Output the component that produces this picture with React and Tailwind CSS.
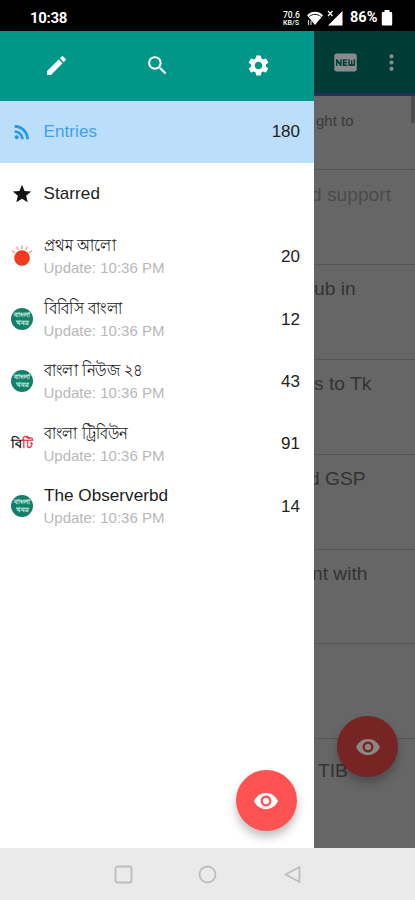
import {
  MdEdit,
  MdSearch,
  MdSettings,
  MdRssFeed,
  MdStar,
  MdMoreVert,
  MdFiberNew,
  MdRemoveRedEye,
} from "react-icons/md";

const feeds = [
  { title: "প্রথম আলো", count: 20, icon: "sun", width: 72 },
  { title: "বিবিসি বাংলা", count: 12, icon: "green", width: 79 },
  { title: "বাংলা নিউজ ২৪", count: 43, icon: "green", width: 99 },
  { title: "বাংলা ট্রিবিউন", count: 91, icon: "tribune", width: 84 },
  { title: "The Observerbd", count: 14, icon: "green", width: 124 },
];

const articles = [
  { text: "ght to", row: "h-[74px] pt-[15px]", style: "text-[15px] ml-[2px] text-[#3a3a3a]" },
  { text: "d support", row: "h-[95px] pt-[15px]", style: "text-[19.2px] -ml-[3px] text-[#4b4b4b]" },
  { text: "ub in", row: "h-[95px] pt-[14px]", style: "text-[19.2px] text-[#333333]" },
  { text: "s to Tk", row: "h-[95px] pt-[14px]", style: "text-[19.2px] text-[#333333]" },
  { text: "d GSP", row: "h-[95px] pt-[14px]", style: "text-[19.2px] -ml-[5px] text-[#333333]" },
  { text: "nt with", row: "h-[94px] pt-[14px]", style: "text-[19.2px] -ml-[2px] text-[#333333]" },
  { text: "", row: "h-[95px] pt-[15px]", style: "" },
  { text: "TIB", row: "h-[110px] pt-[22px]", style: "text-[19.2px] ml-[4px] text-[#333333]" },
];

function SunIcon() {
  return (
    <svg width="22" height="22" viewBox="0 0 22 22">
      <circle cx="11" cy="13" r="7.8" fill="#f03c1c" />
      <g stroke="#f2987f" strokeWidth="1.3" strokeLinecap="round">
        <path d="M11 3.5V1M7 4.5 5.8 2.2M15 4.5l1.2-2.3M3.5 7.5 1.3 6M18.500 7.5 20.700 6" />
      </g>
    </svg>
  );
}

function GreenIcon() {
  return (
    <div className="flex h-[22px] w-[22px] flex-col items-center justify-center rounded-full bg-[#128068] text-[7px] leading-[8px] font-bold text-[#d5eee8]">
      <span>বাংলা</span>
      <span>খবর</span>
    </div>
  );
}

function TribuneIcon() {
  return (
    <div className="flex w-[22px] justify-center text-[13px] leading-[16px] font-black">
      <span className="text-[#222222]">বি</span>
      <span className="text-[#e8303c]">টি</span>
    </div>
  );
}

function FeedIcon({ type }) {
  if (type === "sun") return <SunIcon />;
  if (type === "tribune") return <TribuneIcon />;
  return <GreenIcon />;
}

function StatusBar() {
  return (
    <div className="flex h-[31px] shrink-0 items-center bg-black pt-[5px] pl-[30px] font-['Roboto',sans-serif] text-white">
      <span className="text-[15px] leading-[18px] font-bold tracking-[-0.3px]">10:38</span>
      <svg className="ml-auto" width="19" height="18" fill="#fff" fontWeight="500">
        <text x="1" y="8.500" fontSize="9.500" textLength="17" lengthAdjust="spacingAndGlyphs">
          70.6
        </text>
        <text x="1" y="16" fontSize="8" textLength="16" lengthAdjust="spacingAndGlyphs">
          KB/S
        </text>
      </svg>
      <svg className="ml-[5px]" width="18" height="16" viewBox="0 0 18 16">
        <path d="M1 5.200C5.500.6 12.500.6 17 5.200L9 15z" fill="#fff" />
        <path d="M3.200 6.500C6.500 3.700 11.500 3.700 14.800 6.500" fill="none" stroke="#000" strokeWidth="0.900" />
        <path d="M2.500 10v5M5 11v4" stroke="#ccc" strokeWidth="1.200" />
      </svg>
      <svg className="ml-[3px]" width="16" height="16" viewBox="0 0 16 16">
        <path d="M15.500 1v14.500H1z" fill="#fff" />
        <path d="M1 1l4.500 5M5.500 1 1 6" stroke="#fff" strokeWidth="1.200" />
      </svg>
      <span className="ml-[7px] w-[28px] text-[14.500px] leading-[18px] font-bold">86%</span>
      <svg className="mr-[22px] ml-[3px]" width="12" height="16" viewBox="0 0 12 16" fill="#fff">
        <path d="M3.500 0h5v2H10a1.200 1.200 0 0 1 1.200 1.200v11A1.200 1.200 0 0 1 10 15.500H2a1.200 1.200 0 0 1-1.200-1.200v-11A1.200 1.200 0 0 1 2 2h1.500z" />
      </svg>
    </div>
  );
}

function DrawerHeader() {
  return (
    <div className="grid h-[69.500px] shrink-0 grid-cols-[112px_90px_112px] items-center justify-items-center bg-[#009688] text-white">
      <MdEdit size={25} />
      <MdSearch size={25} />
      <MdSettings size={25} />
    </div>
  );
}

function DrawerItem({ icon, count, className, children }) {
  return (
    <div className={`flex h-[62.400px] shrink-0 items-center pr-[14px] pl-[11px] text-[17px] ${className}`}>
      <div className="flex w-[22px] shrink-0 justify-center">{icon}</div>
      <div className="ml-[10.500px] flex-1">{children}</div>
      <span className="pt-px text-[17px] text-[#222222]">{count}</span>
    </div>
  );
}

function FeedTitle({ title, width }) {
  return (
    <div className="h-[22px]">
      <svg className="overflow-visible" width={width} height="22">
        <text
          x="0"
          y="17"
          fill="#1c1c1c"
          fontSize="17"
          textLength={width}
          lengthAdjust="spacingAndGlyphs"
        >
          {title}
        </text>
      </svg>
    </div>
  );
}

function Drawer() {
  return (
    <div className="relative flex w-[314px] shrink-0 flex-col bg-white">
      <DrawerHeader />
      <DrawerItem
        icon={<MdRssFeed size={22} color="#2196f3" />}
        count={180}
        className="bg-[#bbdefb]"
      >
        <span className="tracking-[0.1px] text-[#429ff0]">Entries</span>
      </DrawerItem>
      <DrawerItem icon={<MdStar size={22} color="#111111" />} className="bg-white">
        <span className="tracking-[0.1px] text-[#222222]">Starred</span>
      </DrawerItem>
      {feeds.map((feed) => (
        <DrawerItem
          key={feed.title}
          icon={<FeedIcon type={feed.icon} />}
          count={feed.count}
          className="bg-white"
        >
          <FeedTitle title={feed.title} width={feed.width} />
          <p className="pt-px text-[15px] leading-[21px] text-[#b8b8b8]">Update: 10:36 PM</p>
        </DrawerItem>
      ))}
      <button className="absolute right-[17.500px] bottom-[17px] flex h-[61px] w-[61px] items-center justify-center rounded-full bg-[#ff5252] text-white shadow-[0_6px_10px_rgba(0,0,0,0.25)]">
        <MdRemoveRedEye size={26} />
      </button>
    </div>
  );
}

function ArticleList() {
  return (
    <div className="relative flex flex-1 flex-col overflow-hidden bg-[#666666]">
      <div className="flex h-[62px] shrink-0 items-center bg-[#003c36] text-[#8b8b8b]">
        <MdFiberNew className="ml-[18px]" size={27} />
        <MdMoreVert className="ml-[20px]" size={25} />
      </div>
      <div className="h-[3px] shrink-0 bg-[#272c58]" />
      {articles.map((article, i) => (
        <div
          key={i}
          className={`shrink-0 border-b border-[#575757] whitespace-nowrap ${article.row}`}
        >
          <p className={`leading-[20px] ${article.style}`}>{article.text}</p>
        </div>
      ))}
      <div className="absolute top-[65px] right-0 h-[27px] w-[4px] bg-[#4c4c4c]" />
      <div className="absolute right-[17px] bottom-[71px] flex h-[61px] w-[61px] items-center justify-center rounded-full bg-[#762424] text-[#8f8585] shadow-[0_6px_10px_rgba(0,0,0,0.25)]">
        <MdRemoveRedEye size={26} />
      </div>
    </div>
  );
}

function NavBar() {
  return (
    <div className="flex h-[52px] shrink-0 items-center bg-[#eaeaea]">
      <svg className="ml-[114px]" width="19" height="19" fill="none" stroke="#bdbdbd" strokeWidth="1.800">
        <rect x="1.500" y="1.500" width="16" height="16" rx="2" />
      </svg>
      <svg className="ml-[65px]" width="19" height="19" fill="none" stroke="#bdbdbd" strokeWidth="1.800">
        <circle cx="9.500" cy="9.500" r="8" />
      </svg>
      <svg className="ml-[66px]" width="19" height="19" fill="none" stroke="#bdbdbd" strokeWidth="1.800">
        <path d="M16.500 2v15L2.500 9.500z" strokeLinejoin="round" />
      </svg>
    </div>
  );
}

export default function App() {
  return (
    <div className="flex h-[900px] w-[415px] flex-col overflow-hidden font-['Liberation_Sans','Noto_Sans',sans-serif]">
      <StatusBar />
      <div className="flex h-[817px] shrink-0 overflow-hidden">
        <Drawer />
        <ArticleList />
      </div>
      <NavBar />
    </div>
  );
}
